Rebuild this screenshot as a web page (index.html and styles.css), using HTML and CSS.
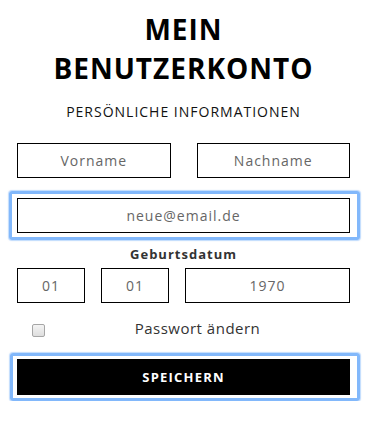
FILE: index.html
```html
<!DOCTYPE html>
<html lang="de">
<head>
<meta charset="utf-8">
<title>Mein Benutzerkonto</title>
<link rel="stylesheet" href="styles.css">
</head>
<body>
<main class="account">
  <h1 class="title">MEIN<br>BENUTZERKONTO</h1>
  <h2 class="subtitle">PERSÖNLICHE INFORMATIONEN</h2>
  <form class="form">
    <div class="row-two">
      <div class="field">Vorname</div>
      <div class="field">Nachname</div>
    </div>
    <div class="focus-wrap email-wrap">
      <div class="field">neue@email.de</div>
    </div>
    <div class="label">Geburtsdatum</div>
    <div class="row-date">
      <div class="field">01</div>
      <div class="field">01</div>
      <div class="field">1970</div>
    </div>
    <div class="row-check">
      <span class="checkbox"></span>
      <span class="check-label">Passwort ändern</span>
    </div>
    <div class="focus-wrap btn-wrap">
      <div class="button">SPEICHERN</div>
    </div>
  </form>
</main>
</body>
</html>
```
FILE: styles.css
```css
html, body {
  margin: 0;
  padding: 0;
  background: #fff;
}
body {
  font-family: "Open Sans", "Liberation Sans", sans-serif;
  color: #000;
}
.account {
  width: 333px;
  margin-left: 17px;
  padding-top: 10px;
}
.title {
  margin: 0;
  text-align: center;
  font-size: 28px;
  line-height: 39px;
  font-weight: 700;
  letter-spacing: 1px;
  color: #000;
}
.subtitle {
  margin: 14px 0 0;
  text-align: center;
  font-size: 14px;
  line-height: 20px;
  font-weight: 400;
  letter-spacing: 1px;
  color: #111;
}
.form {
  margin-top: 21px;
  display: flex;
  flex-direction: column;
}
.field {
  box-sizing: border-box;
  height: 35px;
  border: 1px solid #000;
  display: flex;
  align-items: center;
  justify-content: center;
  font-size: 14px;
  letter-spacing: 1px;
  color: #666;
}
.row-two {
  display: grid;
  grid-template-columns: 1fr 1fr;
  column-gap: 26px;
}
.focus-wrap {
  border: 3px solid #82b8fb;
  border-radius: 3px;
  box-shadow: 0 0 1px 1px rgba(130, 184, 251, 0.5);
}
.email-wrap {
  margin: 13px -10px 0 -8px;
  padding: 4px 7px 4px 5px;
}
.label {
  margin-top: 5px;
  text-align: center;
  font-size: 13px;
  line-height: 18px;
  font-weight: 700;
  letter-spacing: 1px;
  color: #333;
}
.row-date {
  margin-top: 5px;
  display: grid;
  grid-template-columns: 68px 68px 1fr;
  column-gap: 16px;
}
.row-check {
  margin-top: 15px;
  display: flex;
  align-items: center;
  height: 20px;
}
.checkbox {
  box-sizing: border-box;
  width: 13px;
  height: 13px;
  margin-left: 15px;
  margin-top: 4px;
  border: 1px solid #a6a6a6;
  border-radius: 2px;
  background: linear-gradient(#f4f4f4, #dedede);
}
.check-label {
  flex: 1;
  text-align: center;
  font-size: 15px;
  line-height: 20px;
  letter-spacing: 0.5px;
  color: #333;
}
.btn-wrap {
  margin: 15px -10px 0 -7px;
  padding: 3px 7px 3px 4px;
}
.button {
  height: 36px;
  background: #000;
  color: #fff;
  display: flex;
  align-items: center;
  justify-content: center;
  font-size: 13px;
  font-weight: 700;
  letter-spacing: 1.2px;
}
```
